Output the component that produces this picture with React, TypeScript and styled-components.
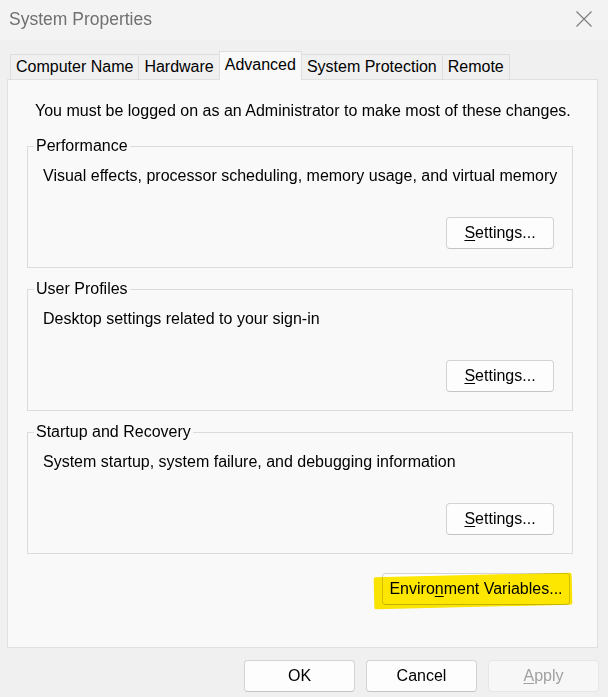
import React, { useState } from "react";
import styled, { createGlobalStyle } from "styled-components";

const GlobalStyle = createGlobalStyle`
  html, body {
    margin: 0;
    padding: 0;
    background: #f0f0f0;
  }
  body {
    font-family: "Liberation Sans", Arial, sans-serif;
    font-size: 16px;
    color: #000;
  }
`;

const tabs = ["Computer Name", "Hardware", "Advanced", "System Protection", "Remote"];

const groups = [
  { title: "Performance", text: "Visual effects, processor scheduling, memory usage, and virtual memory" },
  { title: "User Profiles", text: "Desktop settings related to your sign-in" },
  { title: "Startup and Recovery", text: "System startup, system failure, and debugging information" },
];

const App: React.FC = () => {
  const [activeTab, setActiveTab] = useState("Advanced");

  return (
    <Window>
      <GlobalStyle />
      <TitleBar>
        <Title>System Properties</Title>
        <CloseButton aria-label="Close">
          <svg width="16" height="16" viewBox="0 0 16 16">
            <path d="M0.5 0.5 L15.5 15.5 M15.5 0.5 L0.5 15.5" stroke="#7a7a7a" strokeWidth="1.1" fill="none" />
          </svg>
        </CloseButton>
      </TitleBar>

      <TabStrip>
        {tabs.map(tab => (
          <Tab key={tab} active={tab === activeTab} onClick={() => setActiveTab(tab)}>
            {tab}
          </Tab>
        ))}
      </TabStrip>

      <Panel>
        <Intro>You must be logged on as an Administrator to make most of these changes.</Intro>
        {groups.map(group => (
          <GroupBox key={group.title}>
            <Legend>{group.title}</Legend>
            <GroupBody>
              <Description>{group.text}</Description>
              <ButtonRow>
                <PushButton>
                  <u>S</u>ettings...
                </PushButton>
              </ButtonRow>
            </GroupBody>
          </GroupBox>
        ))}
        <EnvRow>
          <Highlighted>
            <PushButton wide>
              Enviro<u>n</u>ment Variables...
            </PushButton>
          </Highlighted>
        </EnvRow>
      </Panel>

      <Footer>
        <PushButton dialog>OK</PushButton>
        <PushButton dialog>Cancel</PushButton>
        <PushButton dialog disabled>
          <u>A</u>pply
        </PushButton>
      </Footer>
    </Window>
  );
};

const Window = styled.div`
  width: 608px;
  height: 697px;
  display: flex;
  flex-direction: column;
  background: #f0f0f0;
  overflow: hidden;
`;

const TitleBar = styled.div`
  height: 40px;
  display: flex;
  align-items: center;
  justify-content: space-between;
  padding: 0 16px 0 9px;
  background: #f3f3f3;
  box-sizing: border-box;
`;

const Title = styled.div`
  font-family: "Liberation Sans", Arial, sans-serif;
  font-size: 17.5px;
  color: #707070;
  margin-top: -2px;
`;

const CloseButton = styled.div`
  width: 16px;
  height: 16px;
  margin-top: -3px;
  display: flex;
`;

const TabStrip = styled.div`
  display: flex;
  align-items: flex-end;
  height: 28px;
  margin: 11px 0 0 10px;
  position: relative;
  z-index: 1;
`;

const Tab = styled.div<{ active?: boolean }>`
  box-sizing: border-box;
  height: ${p => (p.active ? "29px" : "25px")};
  margin-bottom: ${p => (p.active ? "-1px" : "0")};
  padding: ${p => (p.active ? "0 5px 3px" : "0 5px 0")};
  margin-left: -1px;
  display: flex;
  align-items: center;
  border: 1px solid #dedede;
  border-bottom: none;
  background: ${p => (p.active ? "#f9f9f9" : "#f0f0f0")};
  font-size: 16px;
  line-height: 18px;
  white-space: nowrap;
  cursor: default;
  &:first-child {
    margin-left: 0;
  }
`;

const Panel = styled.div`
  width: 591px;
  box-sizing: border-box;
  margin-left: 7px;
  background: #f9f9f9;
  border: 1px solid #e0e0e0;
  padding: 22px 24px 42px 19px;
`;

const Intro = styled.div`
  line-height: 18px;
  padding-left: 8px;
  white-space: nowrap;
`;

const GroupBox = styled.fieldset`
  margin: 17px 0 0;
  padding: 0 0 18px;
  border: 1px solid #dcdcdc;
  min-inline-size: 0;
  & + & {
    margin-top: 12px;
  }
`;

const Legend = styled.legend`
  margin-left: 6px;
  padding: 0 2px;
  line-height: 18px;
  font-size: 16px;
`;

const GroupBody = styled.div`
  padding: 0 18px 0 15px;
`;

const Description = styled.div`
  margin-top: 12px;
  line-height: 18px;
  white-space: nowrap;
`;

const ButtonRow = styled.div`
  margin-top: 32px;
  display: flex;
  justify-content: flex-end;
`;

const EnvRow = styled.div`
  margin-top: 19px;
  display: flex;
  justify-content: flex-end;
  padding-right: 3px;
`;

const Highlighted = styled.div`
  position: relative;
  display: flex;
  &::after {
    content: "";
    position: absolute;
    left: -8px;
    right: -2px;
    top: 2px;
    bottom: -2px;
    background: #ffe900;
    mix-blend-mode: multiply;
    transform: rotate(-1.4deg);
    border-radius: 2px;
    pointer-events: none;
  }
`;

const PushButton = styled.button<{ wide?: boolean; dialog?: boolean }>`
  box-sizing: border-box;
  width: ${p => (p.wide ? "188px" : p.dialog ? "111px" : "108px")};
  height: 32px;
  padding: 0;
  border: 1px solid #d3d3d3;
  border-bottom-color: #c4c4c4;
  border-radius: 4px;
  background: #fdfdfd;
  font-family: "Liberation Sans", Arial, sans-serif;
  font-size: 16px;
  color: #000;
  display: flex;
  align-items: center;
  justify-content: center;
  u {
    text-underline-offset: 2px;
  }
  &:disabled {
    background: #f7f7f7;
    border-color: #e6e6e6;
    color: #a0a0a0;
  }
`;

const Footer = styled.div`
  display: flex;
  justify-content: flex-end;
  gap: 11px;
  margin-top: 12px;
  padding-right: 9px;
`;

export default App;
